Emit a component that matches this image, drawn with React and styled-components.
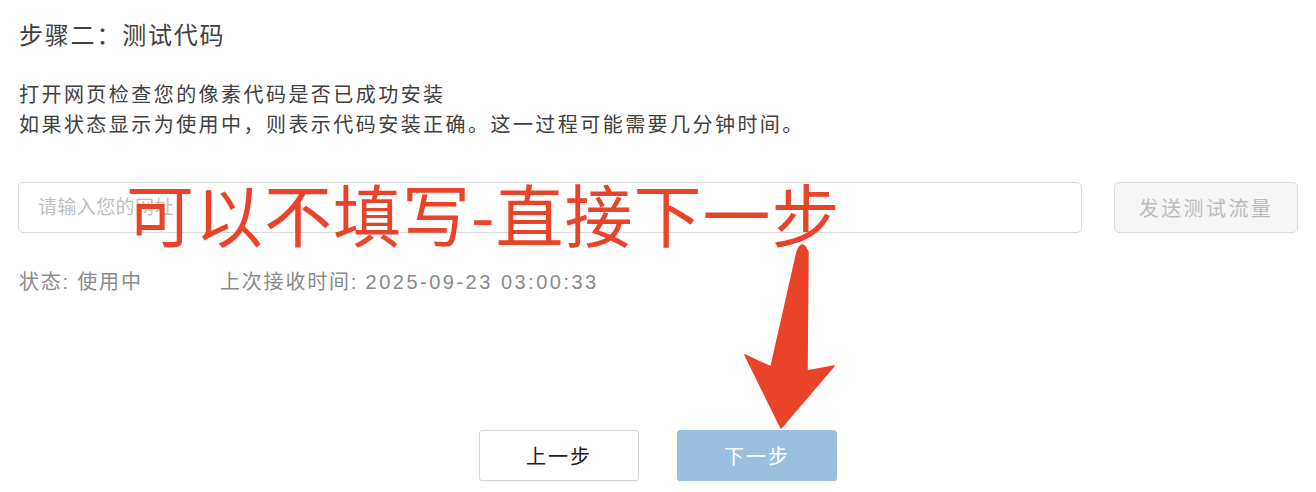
import React from "react";
import styled, { createGlobalStyle } from "styled-components";

const GlobalStyle = createGlobalStyle`
  html, body {
    margin: 0;
    padding: 0;
    background: #ffffff;
    overflow: hidden;
  }
  * {
    box-sizing: border-box;
  }
`;

const App = () => {
  return (
    <>
      <GlobalStyle />
      <Page>
        <Title>步骤二：测试代码</Title>
        <Desc>
          <DescLine>打开网页检查您的像素代码是否已成功安装</DescLine>
          <DescLine>如果状态显示为使用中，则表示代码安装正确。这一过程可能需要几分钟时间。</DescLine>
        </Desc>
        <InputRow>
          <UrlInput placeholder="请输入您的网址" />
          <SendButton disabled>发送测试流量</SendButton>
        </InputRow>
        <StatusRow>
          <StatusItem>状态: 使用中</StatusItem>
          <StatusItem>
            上次接收时间: <Stamp>2025-09-23 03:00:33</Stamp>
          </StatusItem>
        </StatusRow>
        <Footer>
          <StepButton>上一步</StepButton>
          <StepButton primary>下一步</StepButton>
        </Footer>

        <Note>可以不填写-直接下一步</Note>
        <Arrow viewBox="0 0 1316 492" width="1316" height="492">
          <path
            d="M797 252 Q802 238 808 252 L807 371 L834 366 L781 428 L745 355 L771 367 Z"
            fill="#e9432a"
            stroke="#e9432a"
            strokeWidth="1.5"
            strokeLinejoin="round"
          />
        </Arrow>
      </Page>
    </>
  );
};
export default App;

const Page = styled.div`
  position: relative;
  width: 1316px;
  height: 492px;
  padding: 19px 18px 0 18px;
  font-family: "Liberation Sans", "Noto Sans CJK SC", sans-serif;
  display: flex;
  flex-direction: column;
`;
const Title = styled.div`
  font-size: 24px;
  line-height: 34px;
  letter-spacing: 1.8px;
  color: #404040;
  padding-left: 1px;
`;
const Desc = styled.div`
  margin-top: 27px;
  display: flex;
  flex-direction: column;
`;
const DescLine = styled.div`
  font-size: 20px;
  line-height: 30px;
  letter-spacing: 2.45px;
  color: #404040;
  padding-left: 1px;
`;
const InputRow = styled.div`
  margin-top: 42px;
  display: flex;
  gap: 32px;
`;
const UrlInput = styled.input`
  flex: 1;
  height: 51px;
  border: 1px solid #d9d9d9;
  border-radius: 5px;
  padding: 0 19px;
  font-family: inherit;
  font-size: 19px;
  letter-spacing: 0.4px;
  color: #333;
  outline: none;
  &::placeholder {
    color: #c0c0c0;
  }
`;
const SendButton = styled.button`
  width: 184px;
  height: 51px;
  border: 1px solid #dcdcdc;
  border-radius: 5px;
  background: #f5f5f5;
  color: #bdbdbd;
  font-family: inherit;
  font-size: 20px;
  letter-spacing: 2.4px;
  padding: 0;
  cursor: not-allowed;
`;
const StatusRow = styled.div`
  margin-top: 34px;
  display: flex;
  padding-left: 1px;
`;
const StatusItem = styled.div`
  min-width: 201px;
  font-size: 20px;
  line-height: 30px;
  letter-spacing: 1.8px;
  color: #8a8a8a;
`;
const Stamp = styled.span`
  letter-spacing: 2.5px;
`;
const Footer = styled.div`
  margin-top: 133px;
  display: flex;
  justify-content: center;
  gap: 38px;
`;
const StepButton = styled.button`
  width: 160px;
  height: 51px;
  border-radius: 3px;
  border: 1px solid ${(p) => (p.primary ? "#9abfdf" : "#d6d6d6")};
  background: ${(p) => (p.primary ? "#9abfdf" : "#ffffff")};
  color: ${(p) => (p.primary ? "#ffffff" : "#222222")};
  font-family: inherit;
  font-size: 20px;
  letter-spacing: 2px;
  padding: 0;
  box-shadow: 0 2px 2px rgba(0, 0, 0, 0.04);
`;
const Note = styled.div`
  position: absolute;
  left: 126px;
  top: 179px;
  font-family: "Noto Sans CJK SC", sans-serif;
  font-size: 68px;
  line-height: 68px;
  letter-spacing: 1px;
  color: #e9432a;
  white-space: nowrap;
  pointer-events: none;
`;
const Arrow = styled.svg`
  position: absolute;
  left: 0;
  top: 0;
  pointer-events: none;
`;
